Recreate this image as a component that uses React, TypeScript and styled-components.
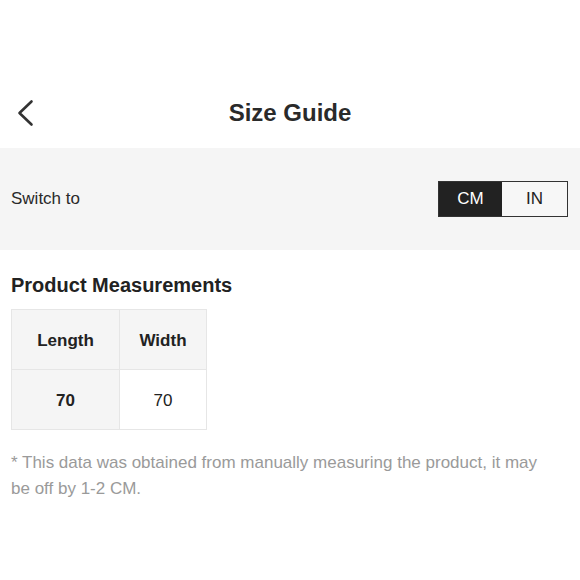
import React, { useState } from 'react';
import styled, { createGlobalStyle } from 'styled-components';

const GlobalStyle = createGlobalStyle`
  body {
    margin: 0;
    background: #fff;
    font-family: 'Liberation Sans', Arial, sans-serif;
    color: #222;
  }
`;

const Page = styled.div`
  width: 580px;
`;

const Header = styled.div`
  position: relative;
  height: 70px;
  margin-top: 78px;
  display: flex;
  align-items: center;
  justify-content: center;
`;

const BackButton = styled.button`
  position: absolute;
  left: 14px;
  top: 50%;
  transform: translateY(-50%);
  width: 24px;
  height: 30px;
  padding: 0;
  border: none;
  background: transparent;
  display: flex;
  align-items: center;
  justify-content: center;
  cursor: pointer;
  color: #333;
`;

const Title = styled.h1`
  margin: 0;
  font-size: 24px;
  font-weight: 700;
  color: #2a2a2a;
`;

const UnitBand = styled.div`
  height: 102px;
  background: #f5f5f5;
  display: flex;
  align-items: center;
  justify-content: space-between;
  padding: 0 12px 0 11px;
`;

const Label = styled.span`
  font-size: 17px;
  color: #2a2a2a;
`;

const Toggle = styled.div`
  display: flex;
  border: 1.5px solid #333;
  height: 34px;
`;

const ToggleOption = styled.button<{ active?: boolean }>`
  width: ${({ active }) => (active ? '63px' : '65px')};
  border: none;
  padding: 0;
  font-family: inherit;
  font-size: 17px;
  cursor: pointer;
  background: ${({ active }) => (active ? '#222' : '#f7f7f7')};
  color: ${({ active }) => (active ? '#fff' : '#222')};
`;

const Section = styled.div`
  padding: 23px 11px 0;
`;

const SectionTitle = styled.h2`
  margin: 0 0 12px;
  font-size: 20px;
  line-height: 24px;
  font-weight: 700;
  color: #222;
`;

const Table = styled.table`
  border-collapse: collapse;
  border: 1.5px solid #e6e6e6;
`;

const Cell = styled.td<{ shaded?: boolean; bold?: boolean; w: number }>`
  width: ${({ w }) => w}px;
  height: 60px;
  padding: 3px 0 0;
  box-sizing: border-box;
  border: 1.5px solid #e6e6e6;
  text-align: center;
  font-size: 17px;
  font-weight: ${({ bold }) => (bold ? 700 : 400)};
  background: ${({ shaded }) => (shaded ? '#f5f5f5' : '#fff')};
  color: #222;
`;

const Note = styled.p`
  margin: 20px 0 0;
  max-width: 545px;
  font-size: 17px;
  line-height: 26px;
  color: #9a9a9a;
`;

const ChevronLeft = () => (
  <svg width="18" height="28" viewBox="0 0 18 28" fill="none">
    <polyline
      points="14.5,2.5 2.5,14 14.5,25.5"
      stroke="currentColor"
      strokeWidth="2.6"
      strokeLinecap="round"
      strokeLinejoin="round"
    />
  </svg>
);

export default function App() {
  const [unit, setUnit] = useState<'CM' | 'IN'>('CM');

  return (
    <Page>
      <GlobalStyle />
      <Header>
        <BackButton type="button" aria-label="Back">
          <ChevronLeft />
        </BackButton>
        <Title>Size Guide</Title>
      </Header>

      <UnitBand>
        <Label>Switch to</Label>
        <Toggle>
          <ToggleOption type="button" active={unit === 'CM'} onClick={() => setUnit('CM')}>CM</ToggleOption>
          <ToggleOption type="button" active={unit === 'IN'} onClick={() => setUnit('IN')}>IN</ToggleOption>
        </Toggle>
      </UnitBand>

      <Section>
        <SectionTitle>Product Measurements</SectionTitle>
        <Table>
          <tbody>
            <tr>
              <Cell w={108} shaded bold>Length</Cell>
              <Cell w={87} shaded bold>Width</Cell>
            </tr>
            <tr>
              <Cell w={108} shaded bold>70</Cell>
              <Cell w={87}>70</Cell>
            </tr>
          </tbody>
        </Table>
        <Note>
          * This data was obtained from manually measuring the product, it may be off by 1-2 CM.
        </Note>
      </Section>
    </Page>
  );
}
